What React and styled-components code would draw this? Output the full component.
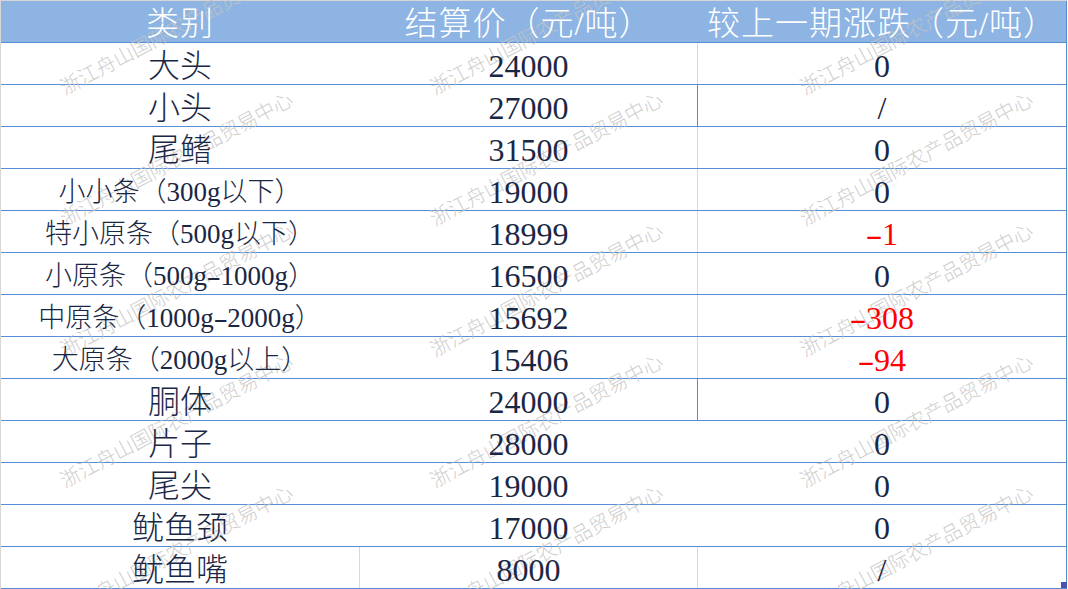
import React from "react";
import styled, { createGlobalStyle } from "styled-components";

const rows = [
  { name: "大头", price: "24000", change: "0", line: ["none", "gray"] },
  { name: "小头", price: "27000", change: "/", line: ["none", "blue"] },
  { name: "尾鳍", price: "31500", change: "0", line: ["none", "gray"] },
  { name: "小小条（300g以下）", price: "19000", change: "0", small: true, line: ["none", "gray"] },
  { name: "特小原条（500g以下）", price: "18999", change: "-1", small: true, line: ["none", "gray"] },
  { name: "小原条（500g-1000g）", price: "16500", change: "0", small: true, line: ["none", "gray"] },
  { name: "中原条（1000g-2000g）", price: "15692", change: "-308", small: true, line: ["none", "gray"] },
  { name: "大原条（2000g以上）", price: "15406", change: "-94", small: true, line: ["none", "gray"] },
  { name: "胴体", price: "24000", change: "0", line: ["none", "blue"] },
  { name: "片子", price: "28000", change: "0", line: ["none", "none"] },
  { name: "尾尖", price: "19000", change: "0", line: ["none", "none"] },
  { name: "鱿鱼颈", price: "17000", change: "0", line: ["none", "none"] },
  { name: "鱿鱼嘴", price: "8000", change: "/", line: ["gray", "gray"] },
];

const MARK_TEXT = "浙江舟山国际农产品贸易中心";
const markX = [66, 436, 806];
const markY = [97, 228, 359, 490, 621];

const lineColors = { none: "transparent", gray: "#d9d9d9", blue: "#558ed5" };

function withDash(text) {
  const parts = text.split("-");
  return parts.map((p, i) => (
    <React.Fragment key={i}>
      {i > 0 && <Dash>-</Dash>}
      {p}
    </React.Fragment>
  ));
}

export default function App() {
  return (
    <Page>
      <GlobalStyle />
      <Table>
        <Row $head>
          <Cell $line="none" $pt={6}>
            <HeadText>类别</HeadText>
          </Cell>
          <Cell $line="none" $pt={6}>
            <HeadText>结算价（元/吨）</HeadText>
          </Cell>
          <Cell $line="edge" $pt={6}>
            <HeadText>较上一期涨跌（元/吨）</HeadText>
          </Cell>
        </Row>
        {rows.map((r) => (
          <Row key={r.name}>
            <Cell $line={r.line[0]} $pt={r.small ? 6 : 4}>
              <Text $small={r.small}>{withDash(r.name)}</Text>
            </Cell>
            <Cell $line={r.line[1]} $pt={4}>
              <Text>{r.price}</Text>
            </Cell>
            <Cell $line="edge" $pt={4}>
              <Text $red={r.change.startsWith("-")}>{withDash(r.change)}</Text>
            </Cell>
          </Row>
        ))}
      </Table>
      <Marks>
        {markX.map((x) =>
          markY.map((y) => (
            <Mark key={`${x}-${y}`} style={{ left: x, top: y - 20 }}>
              {MARK_TEXT}
            </Mark>
          ))
        )}
      </Marks>
      <Handle />
    </Page>
  );
}

const GlobalStyle = createGlobalStyle`
  body {
    margin: 0;
    background: #fff;
  }
`;

const Page = styled.div`
  position: relative;
  width: 1068px;
  height: 589px;
  overflow: hidden;
  background: #fff;
  font-family: "Liberation Serif", "Noto Sans CJK SC", serif;
`;

const Table = styled.div`
  width: 1067px;
  border-top: 1px solid #d6d6d6;
  border-left: 1px solid #d6d6d6;
  box-sizing: border-box;
`;

const Row = styled.div`
  display: grid;
  grid-template-columns: 359px 338px 369px;
  height: 42px;
  box-sizing: border-box;
  border-bottom: 1px solid #558ed5;
  background: ${(p) => (p.$head ? "#8db4e2" : "#fff")};
`;

const Cell = styled.div`
  display: flex;
  justify-content: center;
  align-items: center;
  min-height: 0;
  box-sizing: border-box;
  padding-top: ${(p) => p.$pt}px;
  border-right: 1px solid
    ${(p) => (p.$line === "edge" ? "#558ed5" : lineColors[p.$line])};
`;

const Text = styled.span`
  position: relative;
  z-index: 2;
  line-height: 1;
  white-space: nowrap;
  font-size: ${(p) => (p.$small ? "27px" : "32px")};
  font-weight: 300;
  color: ${(p) => (p.$red ? "#ff0000" : "#1a2744")};
`;

const HeadText = styled.span`
  position: relative;
  z-index: 2;
  line-height: 1;
  white-space: nowrap;
  font-size: 33px;
  font-weight: 300;
  letter-spacing: 1px;
  color: #fff;
`;

const Dash = styled.span`
  display: inline-block;
  width: 0.5em;
  text-align: center;
  transform: scaleX(1.6);
`;

const Marks = styled.div`
  position: absolute;
  inset: 0;
  z-index: 1;
  pointer-events: none;
`;

const Mark = styled.span`
  position: absolute;
  font-family: "Noto Sans CJK SC", sans-serif;
  font-size: 20px;
  line-height: 20px;
  font-weight: 300;
  white-space: nowrap;
  color: rgba(196, 196, 196, 0.85);
  transform: rotate(-28deg);
  transform-origin: 0 100%;
`;

const Handle = styled.div`
  position: absolute;
  left: 1061px;
  top: 582px;
  width: 6px;
  height: 6px;
  background: #4753b4;
  z-index: 3;
`;
